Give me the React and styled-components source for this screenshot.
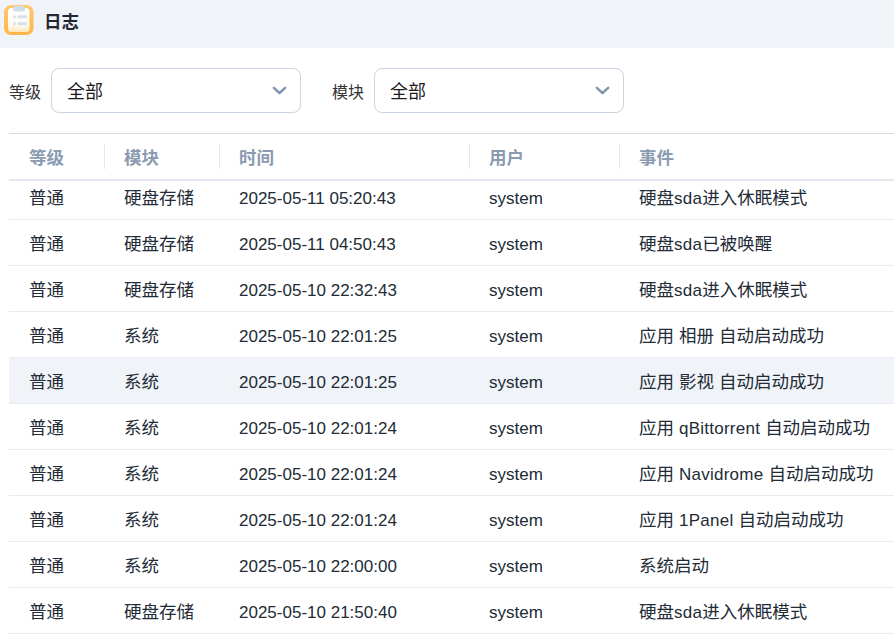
import React from "react";
import styled, { createGlobalStyle } from "styled-components";

const GlobalStyle = createGlobalStyle`
  html, body {
    margin: 0;
    padding: 0;
    background: #fff;
    overflow: hidden;
  }
  body {
    font-family: "Noto Sans CJK SC", "Noto Sans", sans-serif;
    color: #1f2937;
  }
`;

const Page = styled.div`
  width: 894px;
  height: 636px;
  overflow: hidden;
  display: flex;
  flex-direction: column;
`;

const TitleBar = styled.div`
  height: 48px;
  background: #f0f3f8;
  display: flex;
  align-items: center;
  gap: 10px;
  padding: 0 0 8px 4px;
  box-sizing: border-box;
`;

const Title = styled.div`
  font-size: 17.5px;
  font-weight: 700;
  color: #222831;
`;

const Filters = styled.div`
  display: flex;
  align-items: center;
  padding: 20px 0 20px 9px;
`;

const FilterLabel = styled.label`
  font-size: 16px;
  color: #333;
  width: 42px;
  &:not(:first-child) {
    margin-left: 31px;
  }
`;

const Select = styled.div`
  width: 250px;
  height: 45px;
  box-sizing: border-box;
  border: 1px solid #c9d5e2;
  border-radius: 8px;
  padding: 0 13px 1px 15px;
  display: flex;
  align-items: center;
  justify-content: space-between;
  font-size: 18px;
  color: #1c1c1c;
`;

const Table = styled.div`
  margin-left: 9px;
  border-top: 1px solid #d3dce6;
  flex: 1;
  min-height: 0;
  display: flex;
  flex-direction: column;
`;

const columns = "95px 115px 250px 150px 1fr";

const HeadRow = styled.div`
  display: grid;
  grid-template-columns: ${columns};
  height: 47px;
  box-sizing: border-box;
  border-bottom: 2px solid #e4e9f0;
  align-items: center;
  flex: none;
`;

const HeadCell = styled.div`
  font-size: 17.5px;
  font-weight: 700;
  color: #8a9bb2;
  padding-left: 19px;
  height: 25px;
  line-height: 25px;
  border-left: 1px solid ${({ $first }) => ($first ? "transparent" : "#e4e9f0")};
`;

const Body = styled.div`
  flex: 1;
  min-height: 0;
  overflow: hidden;
`;

const Rows = styled.div`
  margin-top: -7px;
`;

const Row = styled.div`
  display: grid;
  grid-template-columns: ${columns};
  height: 46px;
  box-sizing: border-box;
  border-bottom: 1px solid #e8ecf1;
  align-items: center;
  background: ${({ $active }) => ($active ? "#f0f3f8" : "#fff")};
`;

const Cell = styled.div`
  font-size: 17.5px;
  color: #222b36;
  padding-left: 20px;
  white-space: nowrap;
`;

const Latin = styled.span`
  font-family: "Liberation Sans", sans-serif;
  font-size: 17px;
  letter-spacing: ${({ $spaced }) => ($spaced ? "0.25px" : "0")};
`;

const AppIcon = () => (
  <svg width="30" height="30" viewBox="0 0 30 30" aria-hidden="true">
    <defs>
      <linearGradient id="logOrange" x1="0" y1="0" x2="0" y2="1">
        <stop offset="0" stopColor="#ffc871" />
        <stop offset="1" stopColor="#ffb548" />
      </linearGradient>
      <linearGradient id="logPaper" x1="0" y1="0" x2="0" y2="1">
        <stop offset="0" stopColor="#ffffff" />
        <stop offset="0.7" stopColor="#fffaf0" />
        <stop offset="1" stopColor="#ffe6bd" />
      </linearGradient>
    </defs>
    <rect x="0" y="0" width="29.5" height="30" rx="7" fill="url(#logOrange)" />
    <rect x="4" y="3" width="21.5" height="24" rx="3.5" fill="url(#logPaper)" />
    <rect x="9" y="1" width="12" height="5.5" rx="2.5" fill="#cfdeeb" />
    <circle cx="10.5" cy="11.7" r="1.5" fill="#d3e2ef" />
    <circle cx="10.5" cy="18.7" r="1.5" fill="#d3e2ef" />
    <rect x="13.5" y="10.2" width="9.5" height="3" rx="1.2" fill="#d3e2ef" />
    <rect x="13.5" y="17.2" width="9.5" height="3" rx="1.2" fill="#d3e2ef" />
  </svg>
);

const Chevron = () => (
  <svg width="15" height="9" viewBox="0 0 15 9" fill="none" aria-hidden="true">
    <path d="M1.8 1.8L7.5 7l5.7-5.2" stroke="#8095b0" strokeWidth="2.4" strokeLinecap="round" strokeLinejoin="round" />
  </svg>
);

const logs = [
  ["硬盘存储", "2025-05-11 05:20:43", "硬盘sda进入休眠模式"],
  ["硬盘存储", "2025-05-11 04:50:43", "硬盘sda已被唤醒"],
  ["硬盘存储", "2025-05-10 22:32:43", "硬盘sda进入休眠模式"],
  ["系统", "2025-05-10 22:01:25", "应用 相册 自动启动成功"],
  ["系统", "2025-05-10 22:01:25", "应用 影视 自动启动成功", true],
  ["系统", "2025-05-10 22:01:24", "应用 qBittorrent 自动启动成功"],
  ["系统", "2025-05-10 22:01:24", "应用 Navidrome 自动启动成功"],
  ["系统", "2025-05-10 22:01:24", "应用 1Panel 自动启动成功"],
  ["系统", "2025-05-10 22:00:00", "系统启动"],
  ["硬盘存储", "2025-05-10 21:50:40", "硬盘sda进入休眠模式"],
];

// latin runs in the event text get the narrower latin font
const renderEvent = (text) =>
  text.split(/([A-Za-z0-9 ]+)/).map((part, i) =>
    i % 2 ? (
      <Latin key={i} $spaced>
        {part}
      </Latin>
    ) : (
      part
    )
  );

const App = () => {
  return (
    <Page>
      <GlobalStyle />
      <TitleBar>
        <AppIcon />
        <Title>日志</Title>
      </TitleBar>
      <Filters>
        <FilterLabel>等级</FilterLabel>
        <Select>
          全部
          <Chevron />
        </Select>
        <FilterLabel>模块</FilterLabel>
        <Select>
          全部
          <Chevron />
        </Select>
      </Filters>
      <Table>
        <HeadRow>
          <HeadCell $first>等级</HeadCell>
          <HeadCell>模块</HeadCell>
          <HeadCell>时间</HeadCell>
          <HeadCell>用户</HeadCell>
          <HeadCell>事件</HeadCell>
        </HeadRow>
        <Body>
          <Rows>
            {logs.map(([module, time, event, active]) => (
              <Row key={time + event} $active={active}>
                <Cell>普通</Cell>
                <Cell>{module}</Cell>
                <Cell>
                  <Latin>{time}</Latin>
                </Cell>
                <Cell>
                  <Latin>system</Latin>
                </Cell>
                <Cell>{renderEvent(event)}</Cell>
              </Row>
            ))}
          </Rows>
        </Body>
      </Table>
    </Page>
  );
};

export default App;
